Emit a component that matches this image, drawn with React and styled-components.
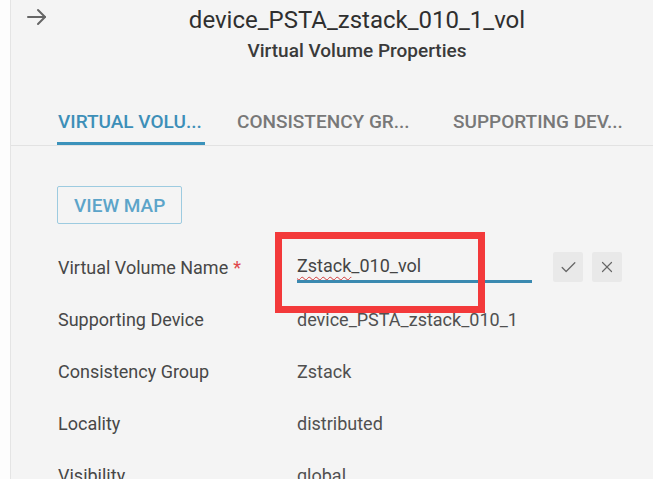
import React from 'react'
import styled, { createGlobalStyle } from 'styled-components'
import { Check, X } from 'lucide-react'

const GlobalStyle = createGlobalStyle`
  html, body {
    margin: 0;
    padding: 0;
    background: #ffffff;
    font-family: Roboto, "Noto Sans", "Liberation Sans", sans-serif;
  }
  * { box-sizing: border-box; }
`

const Page = styled.div`
  position: relative;
  height: 479px;
  overflow: hidden;
  padding-left: 10px;
  background: #fdfdfd;
`

const Panel = styled.section`
  height: 100%;
  background: #f4f4f4;
  border-left: 1px solid #e4e4e4;
`

const Header = styled.header`
  display: flex;
  align-items: flex-start;
`

const BackButton = styled.button`
  border: 0;
  background: transparent;
  padding: 5px 0 0 14px;
  width: 50px;
  color: #666;
  cursor: pointer;
  display: flex;
`

const TitleBlock = styled.div`
  flex: 1;
  text-align: center;
  padding-top: 5px;
`

const Title = styled.h1`
  margin: 0;
  font-size: 24px;
  line-height: 30px;
  font-weight: 400;
  color: #2f2f2f;
`

const Subtitle = styled.h2`
  margin: 4px 0 0;
  font-size: 19px;
  line-height: 24px;
  font-weight: 500;
  color: #3a3a3a;
`

const TabBar = styled.nav`
  display: flex;
  margin-top: 47px;
  padding-left: 46px;
  border-bottom: 1px solid #e2e2e2;
`

const Tab = styled.div`
  width: ${({ $w }) => $w}px;
  margin-right: ${({ $gap }) => $gap}px;
  padding: 0 0 8px 1px;
  font-size: 19px;
  line-height: 24px;
  font-weight: 500;
  white-space: nowrap;
  color: ${({ $active }) => ($active ? '#3d8fb8' : '#787878')};
  border-bottom: 3px solid ${({ $active }) => ($active ? '#3b92bb' : 'transparent')};
`

const Content = styled.div`
  padding: 40px 0 0 46px;
`

const OutlineButton = styled.button`
  height: 38px;
  padding: 0 16px;
  border: 1px solid #9dcbe0;
  border-radius: 2px;
  background: transparent;
  color: #5ca4c9;
  font-family: inherit;
  font-size: 19px;
  font-weight: 500;
  cursor: pointer;
`

const Rows = styled.div`
  margin-top: 17px;
`

const Row = styled.div`
  display: flex;
  align-items: center;
  height: 52px;
  font-size: 18px;
`

const Label = styled.div`
  width: 240px;
  padding-left: 1px;
  color: #474747;
`

const Required = styled.span`
  color: #e0474c;
  margin-left: 5px;
`

const Value = styled.div`
  color: #505050;
`

const Field = styled.div`
  width: 235px;
  height: 31px;
  padding-top: 3px;
  border-bottom: 3px solid #3a89b0;
  color: #444;
`

const Misspelled = styled.span`
  text-decoration: underline wavy #d23b3b;
  text-decoration-thickness: 1px;
  text-underline-offset: 4px;
`

const IconButton = styled.button`
  width: 30px;
  height: 30px;
  margin-left: ${({ $gap }) => $gap}px;
  border: 0;
  border-radius: 2px;
  background: #e9e9e9;
  color: #676767;
  display: flex;
  align-items: center;
  justify-content: center;
  padding: 0;
  cursor: pointer;
`

const Highlight = styled.div`
  position: absolute;
  left: 275px;
  top: 232px;
  width: 210px;
  height: 81px;
  border: 7px solid #f3393a;
  pointer-events: none;
`

const ArrowIcon = () => (
  <svg width="24" height="24" viewBox="0 0 24 24" fill="none" stroke="currentColor" strokeWidth="2" strokeLinecap="round" strokeLinejoin="round">
    <path d="M3 12h17" />
    <path d="M13 5l7 7-7 7" />
  </svg>
)

const details = [
  ['Supporting Device', 'device_PSTA_zstack_010_1'],
  ['Consistency Group', 'Zstack'],
  ['Locality', 'distributed'],
  ['Visibility', 'global'],
]

export default function App() {
  return (
    <>
      <GlobalStyle />
      <Page>
        <Panel>
          <Header>
            <BackButton aria-label="close">
              <ArrowIcon />
            </BackButton>
            <TitleBlock>
              <Title>device_PSTA_zstack_010_1_vol</Title>
              <Subtitle>Virtual Volume Properties</Subtitle>
            </TitleBlock>
          </Header>

          <TabBar>
            <Tab $active $w={148} $gap={31}>VIRTUAL VOLU...</Tab>
            <Tab $w={178} $gap={38}>CONSISTENCY GR...</Tab>
            <Tab $w={178} $gap={0}>SUPPORTING DEV...</Tab>
          </TabBar>

          <Content>
            <OutlineButton>VIEW MAP</OutlineButton>
            <Rows>
              <Row>
                <Label>
                  Virtual Volume Name<Required>*</Required>
                </Label>
                <Field>
                  <Misspelled>Zstack</Misspelled>_010_vol
                </Field>
                <IconButton $gap={21} aria-label="save">
                  <Check size={19} strokeWidth={1.6} />
                </IconButton>
                <IconButton $gap={9} aria-label="cancel">
                  <X size={18} strokeWidth={1.6} />
                </IconButton>
              </Row>
              {details.map(([label, value]) => (
                <Row key={label}>
                  <Label>{label}</Label>
                  <Value>{value}</Value>
                </Row>
              ))}
            </Rows>
          </Content>
        </Panel>
        <Highlight />
      </Page>
    </>
  )
}
